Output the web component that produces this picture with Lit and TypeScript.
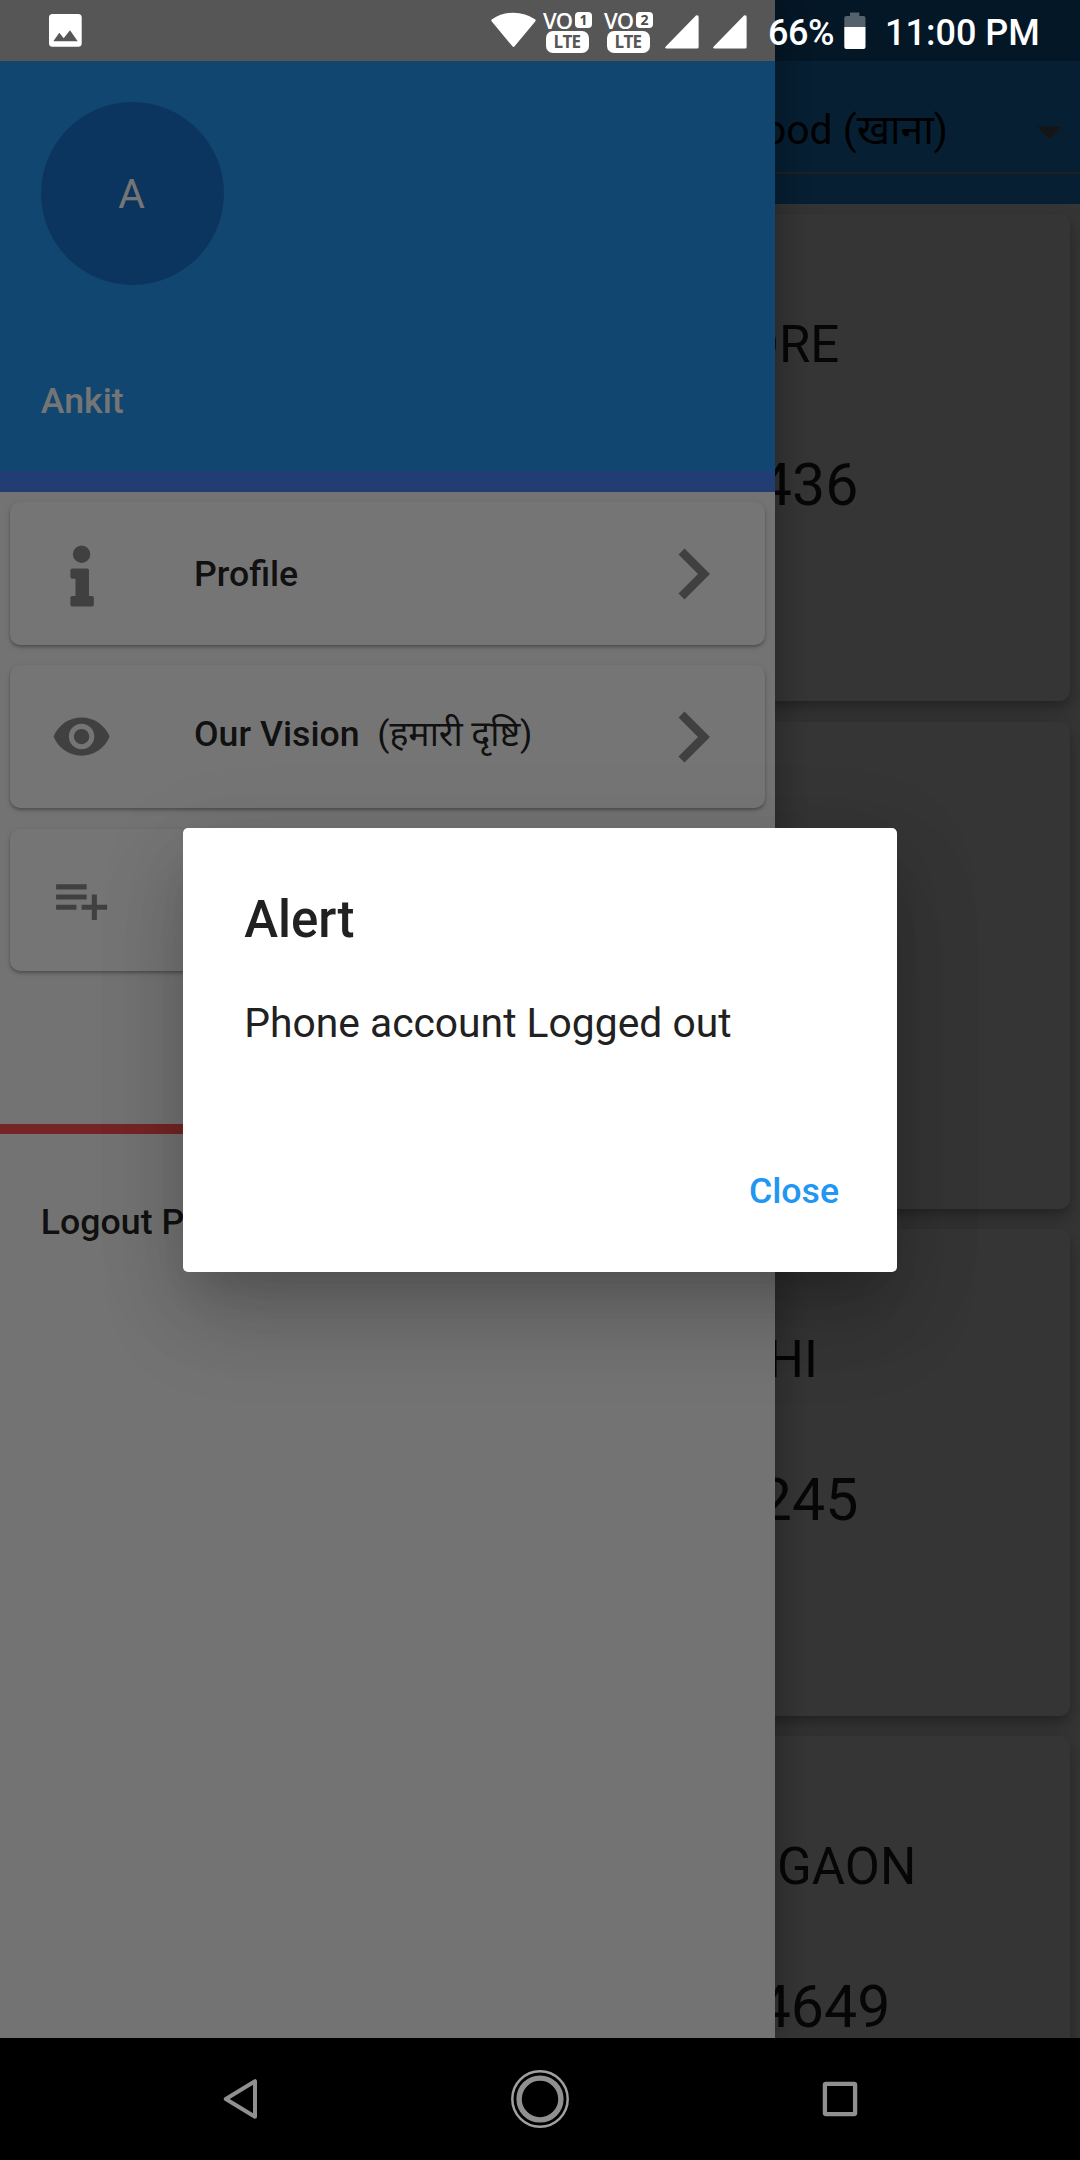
import { LitElement, html, svg, css, nothing } from "lit";
import { customElement, property } from "lit/decorators.js";

const FONT = css`Roboto, "Noto Sans", "Noto Sans Devanagari", sans-serif`;
const BADGE_FONT = css`"Open Sans", "Noto Sans", sans-serif`;

interface Listing {
  city: string;
  phone: string;
  cityInset: number;
  phoneInset: number;
}

interface MenuEntry {
  icon: "info" | "eye" | "playlist";
  label: string;
  hindi?: string;
}

const LISTINGS: Listing[] = [
  { city: "ORE", phone: "436", cityInset: 230.5, phoneInset: 211.5 },
  { city: "", phone: "", cityInset: 0, phoneInset: 0 },
  { city: "HI", phone: "245", cityInset: 252, phoneInset: 211.5 },
  { city: "GAON", phone: "4649", cityInset: 153.5, phoneInset: 179.5 },
];

const MENU: MenuEntry[] = [
  { icon: "info", label: "Profile" },
  { icon: "eye", label: "Our Vision  ", hindi: "(हमारी दृष्टि)" },
  { icon: "playlist", label: "" },
];

@customElement("status-bar")
class StatusBar extends LitElement {
  static styles = css`
    :host { display: flex; align-items: flex-start; height: 61px; box-sizing: border-box; padding-left: 49px; background: rgba(0, 0, 0, 0.25); color: #fff; font-family: ${FONT}; }
    svg { display: block; flex: none; }
    .photo { margin-top: 14px; margin-right: 409px; }
    .wifi { margin-top: 12px; margin-right: 7px; }
    .volte { width: 49px; margin-right: 12px; padding-top: 12px; flex: none; }
    .top { display: flex; align-items: center; justify-content: space-between; height: 16px; }
    .vo { font: 600 22px/16px ${BADGE_FONT}; letter-spacing: -1px; width: 30px; white-space: nowrap; }
    .sim { width: 17px; height: 16px; flex: none; border-radius: 4px; background: #fff; color: #4a4a4a; font: 700 14px/16px ${BADGE_FONT}; text-align: center; }
    .lte { width: 43px; height: 22px; margin: 3px 0 0 2.5px; border-radius: 7px; background: #fff; color: #565656; font: 700 17px/22px ${BADGE_FONT}; text-align: center; letter-spacing: -0.7px; }
    .signal { margin-top: 14.5px; margin-right: 14px; }
    .percent, .clock { font-size: 36px; font-weight: 500; line-height: 42px; margin-top: 11.5px; white-space: nowrap; }
    .percent { width: 76px; margin-left: 7px; letter-spacing: -0.5px; }
    .battery { margin-top: 12px; }
    .clock { margin-left: 19px; }
  `;

  private volte(sim: number) {
    return html`<div class="volte">
      <div class="top"><span class="vo">VO</span><span class="sim">${sim}</span></div>
      <div class="lte">LTE</div>
    </div>`;
  }

  private signal() {
    return html`<svg class="signal" width="34" height="34" viewBox="0 0 34 34">
      <path fill="#fff" d="M31 .6Q33.6-.6 33.6 2V32q0 1.500-1.500 1.500H1.500Q-.8 33.500.8 31.500Z" />
    </svg>`;
  }

  render() {
    return html`
      <svg class="photo" width="33" height="33" viewBox="0 0 33 33">
        <path fill="#fff" fill-rule="evenodd" d="M3.600 0H29.200Q32.700 0 32.700 3.600V29.200Q32.700 32.700 29.200 32.700H3.600Q0 32.700 0 29.200V3.600Q0 0 3.600 0ZM4.300 27.200H28.700L21 16.300 14.700 24.200 10.300 18.700Z" />
      </svg>
      <svg class="wifi" width="45" height="36" viewBox="0 0 45 36">
        <path fill="#fff" d="M.8 9.400Q-.3 8.200 1 7.200Q10.500.7 22.500.7T44 7.200Q45.300 8.200 44.200 9.400L23.600 34.300Q22.500 35.600 21.400 34.300Z" />
      </svg>
      ${this.volte(1)} ${this.volte(2)} ${this.signal()} ${this.signal()}
      <span class="percent">66%</span>
      <svg class="battery" width="22" height="38" viewBox="0 0 22 38">
        <path fill="#53626b" d="M6 .4h9.400v3.600H19.500q2 0 2 2V15H.3V6q0-2 2-2H6Z" />
        <path fill="#fff" d="M.3 15H21.500V35q0 2-2 2H2.300q-2 0-2-2Z" />
      </svg>
      <span class="clock">11:00 PM</span>
    `;
  }
}

@customElement("listing-page")
class ListingPage extends LitElement {
  static styles = css`
    :host { display: flex; flex-direction: column; overflow: hidden; background: #fafafa; color: #212121; font-family: ${FONT}; }
    .bar { flex: none; height: 204px; box-sizing: border-box; padding: 87px 0 0 700px; background: #2196f3; }
    .select { display: flex; align-items: center; justify-content: flex-end; height: 87px; box-sizing: border-box; border-bottom: 2px solid #8c9ea5; }
    .value { font-size: 40.8px; line-height: 48px; color: #000; white-space: nowrap; margin-right: 71px; }
    .arrow { display: block; margin: 3px 0 0; }
    .card { flex: none; height: 487px; box-sizing: border-box; margin: 10.2px; padding-top: 101px; border-radius: 10.2px; background: #fff; box-shadow: 0 5px 8px rgba(0, 0, 0, 0.16), 0 10px 22px rgba(0, 0, 0, 0.2); color: rgba(0, 0, 0, 0.87); text-align: right; }
    .city { height: 60px; font-size: 51px; line-height: 60px; }
    .phone { height: 70px; margin-top: 74.8px; font-size: 59px; line-height: 70px; }
  `;

  render() {
    return html`
      <div class="bar">
        <div class="select">
          <span class="value">Food (खाना)</span>
          <svg class="arrow" width="61" height="61" viewBox="0 0 24 24"><path fill="#646464" d="M7 10l5 5 5-5z" /></svg>
        </div>
      </div>
      ${LISTINGS.map(
        (item) => html`<div class="card">
          <div class="city" style="padding-right:${item.cityInset}px">${item.city}</div>
          <div class="phone" style="padding-right:${item.phoneInset}px">${item.phone}</div>
        </div>`,
      )}
    `;
  }
}

@customElement("menu-icon")
class MenuIcon extends LitElement {
  @property() name = "info";

  static styles = css`
    :host { display: block; width: 61.2px; height: 61.2px; }
    svg { display: block; width: 100%; height: 100%; fill: rgba(0, 0, 0, 0.45); }
  `;

  private shape() {
    switch (this.name) {
      case "eye":
        return svg`<path d="M12 4.500C7 4.500 2.730 7.610 1 12c1.730 4.390 6 7.500 11 7.500s9.270-3.110 11-7.500c-1.730-4.390-6-7.500-11-7.500zM12 17c-2.760 0-5-2.240-5-5s2.240-5 5-5 5 2.240 5 5-2.240 5-5 5zm0-8c-1.660 0-3 1.340-3 3s1.340 3 3 3 3-1.340 3-3-1.340-3-3-3z" />`;
      case "playlist":
        return svg`<path d="M14 10H2v2h12v-2zm0-4H2v2h12V6zm4 8v-4h-2v4h-4v2h4v4h2v-4h4v-2h-4zM2 16h8v-2H2v2z" />`;
      default:
        return svg`<g>
          <circle cx="12" cy="4.400" r="3.400" />
          <path d="M8 10h6q.7 0 .7.700V20.800h1.200q.7 0 .7.700v2.700q0 .7-.7.700H8.100q-.7 0-.7-.7v-2.700q0-.7.700-.7H9.400V14H8.100q-.7 0-.7-.7V10.700q0-.7.700-.7z" transform="translate(.2 0)" />
        </g>`;
    }
  }

  render() {
    return html`<svg viewBox="0 0 24 24" overflow="visible">${this.shape()}</svg>`;
  }
}

@customElement("nav-drawer")
class NavDrawer extends LitElement {
  static styles = css`
    :host { display: flex; flex-direction: column; background: #fafafa; color: rgba(0, 0, 0, 0.87); font: 500 35.7px/42px ${FONT}; box-shadow: 0 0 40px rgba(0, 0, 0, 0.35); }
    .inset { flex: none; height: 61px; }
    .header { flex: none; height: 410.4px; box-sizing: border-box; padding: 40.8px; background: #2498f2; color: #fff; }
    .avatar { display: flex; align-items: center; justify-content: center; width: 183.6px; height: 183.6px; margin-bottom: 94.5px; padding-right: 2px; box-sizing: border-box; border-radius: 50%; background: #1a75d0; font-size: 40.8px; font-weight: 400; }
    .strip { flex: none; height: 20.6px; margin-bottom: 10.2px; background: #4a86fa; }
    .card { display: flex; align-items: center; flex: none; height: 142.8px; box-sizing: border-box; margin: 0 10.2px 20.4px; padding: 0 21px 0 40.8px; border-radius: 10.2px; background: #fff; box-shadow: 0 2px 3px rgba(0, 0, 0, 0.24), 0 2px 6px rgba(0, 0, 0, 0.12); }
    .label { flex: 1; padding-left: 81.8px; white-space: pre; }
    .tall { padding-bottom: 6px; }
    .hindi { font-weight: 400; letter-spacing: -0.1px; }
    .chevron { display: block; flex: none; fill: rgba(0, 0, 0, 0.45); }
    .rule { flex: none; height: 10.2px; margin-top: 132.5px; background: #ff5252; }
    .logout { margin-top: 67px; padding-left: 40.8px; }
  `;

  render() {
    return html`
      <div class="inset"></div>
      <div class="header">
        <div class="avatar">A</div>
        <div>Ankit</div>
      </div>
      <div class="strip"></div>
      ${MENU.map(
        (entry) => html`<div class="card">
          <menu-icon name=${entry.icon}></menu-icon>
          <span class="label ${entry.hindi ? "tall" : ""}">${entry.label}${entry.hindi ? html`<span class="hindi">${entry.hindi}</span>` : nothing}</span>
          <svg class="chevron" width="102" height="102" viewBox="0 0 24 24"><path d="M10 6L8.590 7.410 13.170 12l-4.580 4.590L10 18l6-6z" /></svg>
        </div>`,
      )}
      <div class="rule"></div>
      <div class="logout">Logout Phone</div>
    `;
  }
}

@customElement("alert-dialog")
class AlertDialog extends LitElement {
  static styles = css`
    :host { display: flex; flex-direction: column; box-sizing: border-box; width: 714px; height: 444px; padding: 62.5px 58px 60px 61.2px; border-radius: 5.1px; background: #fff; color: #212121; font-family: ${FONT}; box-shadow: 0 28px 38px -18px rgba(0, 0, 0, 0.14), 0 50px 90px 0 rgba(0, 0, 0, 0.14), 0 20px 90px 4px rgba(0, 0, 0, 0.1); }
    .title { font-size: 51px; font-weight: 500; line-height: 60px; }
    .message { margin-top: 48.5px; font-size: 40.8px; line-height: 48px; }
    .action { align-self: flex-end; margin-top: auto; font-size: 35.7px; font-weight: 500; line-height: 42px; color: #2196f3; }
  `;

  render() {
    return html`
      <div class="title">Alert</div>
      <div class="message">Phone account Logged out</div>
      <div class="action">Close</div>
    `;
  }
}

@customElement("system-nav")
class SystemNav extends LitElement {
  static styles = css`
    :host { display: flex; align-items: center; justify-content: space-between; box-sizing: border-box; padding: 0 210px; background: #000; }
    svg { display: block; fill: none; stroke: #909090; }
  `;

  render() {
    return html`
      <svg width="60" height="60" viewBox="0 0 60 60"><path stroke-width="4" stroke-linejoin="round" d="M15.800 30L45 12.200V47.800Z" /></svg>
      <svg width="60" height="60" viewBox="0 0 60 60">
        <circle cx="30" cy="30" r="27.700" stroke="#a0a0a0" stroke-width="2.500" />
        <circle cx="30" cy="30" r="20.900" stroke-width="5.400" />
      </svg>
      <svg width="60" height="60" viewBox="0 0 60 60"><rect x="14.900" y="14.900" width="30.200" height="30.200" rx="1" stroke-width="4.300" /></svg>
    `;
  }
}

@customElement("app-root")
class AppRoot extends LitElement {
  static styles = css`
    :host { display: grid; grid-template: 2038px 122px / 1080px; width: 1080px; height: 2160px; overflow: hidden; background: #000; }
    .screen { display: grid; grid-template: 61px 1977px / 1080px; overflow: hidden; }
    .screen > * { grid-area: 1 / 1 / 3 / 2; min-height: 0; }
    .scrim { background: rgba(0, 0, 0, 0.54); }
    .drawer { width: 775.2px; }
    .dialog { align-self: start; justify-self: center; margin-top: 827.5px; }
    .screen > .status { grid-area: 1 / 1; }
  `;

  render() {
    return html`
      <div class="screen">
        <listing-page></listing-page>
        <div class="scrim"></div>
        <nav-drawer class="drawer"></nav-drawer>
        <div class="scrim"></div>
        <alert-dialog class="dialog"></alert-dialog>
        <status-bar class="status"></status-bar>
      </div>
      <system-nav></system-nav>
    `;
  }
}
